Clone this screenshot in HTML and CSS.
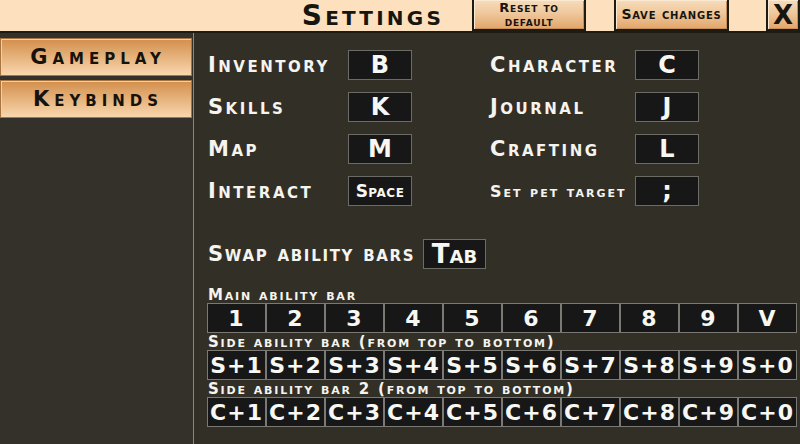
FILE: index.html
```html
<!DOCTYPE html>
<html>
<head>
<meta charset="utf-8">
<link rel="stylesheet" href="styles.css">
</head>
<body>
<div class="app">
  <header class="topbar">
    <div class="title-wrap"><h1 class="title">Settings</h1></div>
    <button class="tbtn reset"><span class="line">Reset to</span><span class="line">default</span></button>
    <div class="spacer1"></div>
    <button class="tbtn save">Save changes</button>
    <div class="spacer2"></div>
    <button class="tbtn close">X</button>
  </header>
  <div class="main">
    <nav class="sidebar">
      <button class="tab">Gameplay</button>
      <button class="tab">Keybinds</button>
    </nav>
    <section class="content">
      <div class="binds">
        <div class="bind"><span class="label l1">Inventory</span><span class="key">B</span></div>
        <div class="bind"><span class="label l2">Character</span><span class="key">C</span></div>
        <div class="bind"><span class="label l1">Skills</span><span class="key">K</span></div>
        <div class="bind"><span class="label l2">Journal</span><span class="key">J</span></div>
        <div class="bind"><span class="label l1">Map</span><span class="key">M</span></div>
        <div class="bind"><span class="label l2">Crafting</span><span class="key">L</span></div>
        <div class="bind"><span class="label l1">Interact</span><span class="key small">Space</span></div>
        <div class="bind"><span class="label l2 smalllabel">Set pet target</span><span class="key">;</span></div>
      </div>
      <div class="swap">
        <span class="label swaplabel">Swap ability bars</span><span class="key tabkey">Tab</span>
      </div>
      <div class="barlabel first">Main ability bar</div>
      <div class="bar">
        <span class="cell">1</span><span class="cell">2</span><span class="cell">3</span><span class="cell">4</span><span class="cell">5</span><span class="cell">6</span><span class="cell">7</span><span class="cell">8</span><span class="cell">9</span><span class="cell">V</span>
      </div>
      <div class="barlabel">Side ability bar (from top to bottom)</div>
      <div class="bar">
        <span class="cell">S+1</span><span class="cell">S+2</span><span class="cell">S+3</span><span class="cell">S+4</span><span class="cell">S+5</span><span class="cell">S+6</span><span class="cell">S+7</span><span class="cell">S+8</span><span class="cell">S+9</span><span class="cell">S+0</span>
      </div>
      <div class="barlabel">Side ability bar 2 (from top to bottom)</div>
      <div class="bar">
        <span class="cell">C+1</span><span class="cell">C+2</span><span class="cell">C+3</span><span class="cell">C+4</span><span class="cell">C+5</span><span class="cell">C+6</span><span class="cell">C+7</span><span class="cell">C+8</span><span class="cell">C+9</span><span class="cell">C+0</span>
      </div>
    </section>
  </div>
</div>
</body>
</html>
```
FILE: styles.css
```css
* { box-sizing: border-box; }
html, body {
  margin: 0;
  padding: 0;
  width: 800px;
  height: 444px;
  overflow: hidden;
  background: #322f26;
  font-family: "DejaVu Sans", "Liberation Sans", sans-serif;
  font-weight: bold;
  font-variant: small-caps;
}
button {
  font-family: inherit;
  font-weight: inherit;
  font-variant: inherit;
  padding: 0;
  margin: 0;
  cursor: pointer;
}
.app {
  display: flex;
  flex-direction: column;
  width: 800px;
  height: 444px;
}
.topbar {
  display: grid;
  grid-template-columns: 472px 114px 28px 115px 37px 34px;
  height: 33px;
  background: #fde0be;
  border-bottom: 2px solid #1d1b14;
}
.title-wrap {
  display: flex;
  justify-content: flex-end;
  align-items: center;
  padding-right: 28px;
}
.title {
  margin: 0;
  font-size: 28px;
  line-height: 31px;
  letter-spacing: 3.2px;
  color: #17150f;
}
.tbtn {
  height: 31px;
  border: 2px solid #1d1b12;
  border-top: none;
  background: linear-gradient(#f7dcbc 0%, #efc89c 45%, #e1a56a 100%);
  box-shadow: inset 1px 1px 0 #fbe9d2, inset -1px -1px 0 #c98e56;
  color: #17150f;
  font-size: 14px;
  line-height: 13px;
  letter-spacing: 0.8px;
}
.reset {
  display: flex;
  flex-direction: column;
  align-items: center;
  justify-content: center;
  font-size: 13px;
  line-height: 14px;
}
.reset .line { display: block; }
.save { font-size: 14px; }
.close {
  display: flex;
  align-items: center;
  justify-content: center;
  font-size: 26px;
  line-height: 28px;
  letter-spacing: 0;
}
.main {
  flex: 1;
  display: flex;
}
.sidebar {
  width: 194px;
  border-right: 1px solid #8a877c;
  display: flex;
  flex-direction: column;
  gap: 4px;
  padding-top: 5px;
  background: #34312a;
}
.tab {
  width: 192px;
  height: 38px;
  border: 1px solid #a8743f;
  background: linear-gradient(#d28f4b 0%, #e6b27c 50%, #f8d7ae 100%);
  box-shadow: inset 1px 1px 0 #f3cfa3;
  color: #17120b;
  font-size: 21px;
  letter-spacing: 5px;
  line-height: 36px;
  text-align: center;
  padding-left: 4px;
}
.content {
  flex: 1;
  padding: 17px 0 0 14px;
  color: #f5f4ef;
}
.binds {
  display: grid;
  grid-template-columns: 282px 210px;
  row-gap: 12px;
}
.bind {
  display: flex;
  align-items: center;
  height: 30px;
}
.label {
  font-size: 21px;
  letter-spacing: 2.5px;
  white-space: nowrap;
}
.l1 { width: 140px; }
.l2 { width: 145px; }
.smalllabel { font-size: 16px; letter-spacing: 2px; }
.key {
  display: flex;
  align-items: center;
  justify-content: center;
  width: 64px;
  height: 30px;
  background: #171717;
  border: 1px solid #6c6b66;
  font-size: 24px;
  color: #f7f7f3;
}
.key.small { font-size: 17px; letter-spacing: 0.5px; }
.swap {
  display: flex;
  align-items: center;
  margin-top: 33px;
  height: 30px;
}
.swaplabel { width: 215px; letter-spacing: 1.7px; }
.tabkey { width: 63px; font-size: 26px; }
.barlabel {
  font-size: 15px;
  line-height: 16px;
  letter-spacing: 1.8px;
  padding-top: 1px;
  white-space: nowrap;
}
.barlabel.first { margin-top: 17px; }
.bar {
  display: grid;
  grid-template-columns: repeat(10, 59px);
  margin-left: -1px;
  height: 30px;
}
.cell {
  display: flex;
  align-items: center;
  justify-content: center;
  background: #171717;
  border: 1px solid #7a7974;
  font-size: 22px;
  letter-spacing: 1px;
  color: #f7f7f3;
  white-space: nowrap;
  overflow: hidden;
}
```
